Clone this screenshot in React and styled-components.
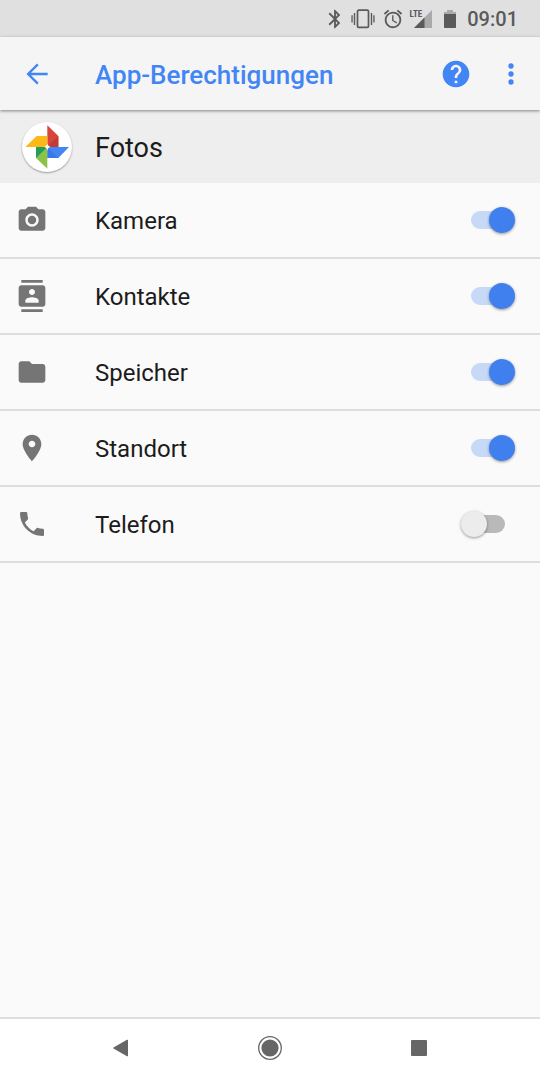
import React, {useState} from "react";
import styled, {createGlobalStyle} from "styled-components";

const GlobalStyle = createGlobalStyle`
  * {
    box-sizing: border-box;
  }
  body {
    margin: 0;
    background: #fafafa;
    color: #1c1c1c;
    font-family: Roboto, "Liberation Sans", sans-serif;
  }
`

const Page = styled.div`
  display: flex;
  flex-direction: column;
  min-height: 100vh;
`

const StatusBar = styled.div`
  display: flex;
  align-items: center;
  justify-content: flex-end;
  height: 37px;
  padding: 0 22px 0 16px;
  background: #e0e0e0;
  color: #5a5a5a;
`

const StatusIcon = styled.svg`
  display: block;
  flex: none;
  margin-right: ${({$gap}) => $gap}px;
  fill: currentColor;
`

// the triangle's empty corner runs under the network label
const SignalIcon = styled(StatusIcon)`
  margin-left: -8px;
`

const Network = styled.span`
  align-self: flex-start;
  margin-top: 8px;
  font-family: "Roboto Condensed", Roboto, sans-serif;
  font-size: 9px;
  line-height: 12px;
  font-weight: 700;
`

const Time = styled.time`
  font-size: 20px;
  line-height: 24px;
  font-weight: 500;
`

const Header = styled.header`
  position: relative;
  display: flex;
  align-items: center;
  height: 73px;
  padding-right: 13px;
  background: #f5f5f5;
  color: #4285f4;
  box-shadow: 0 1px 3px rgba(0, 0, 0, 0.45);
`

const Leading = styled.div`
  display: flex;
  flex: none;
  width: 95px;
  padding-left: ${({$inset}) => $inset}px;
`

const IconButton = styled.button`
  display: flex;
  align-items: center;
  justify-content: center;
  width: ${({$width}) => $width || 32}px;
  height: 48px;
  padding: 0;
  border: none;
  background: none;
  color: inherit;
  cursor: pointer;
`

const Title = styled.h1`
  flex: 1;
  margin: 0;
  padding-top: 2px;
  font-size: 26px;
  line-height: 32px;
  font-weight: 500;
`

const Actions = styled.div`
  display: flex;
  gap: 23px;
`

const Glyph = styled.svg`
  display: block;
  flex: none;
  width: 32px;
  height: 32px;
  fill: currentColor;
`

const AppInfo = styled.section`
  display: flex;
  align-items: center;
  height: 73px;
  background: #eeeeee;
`

const AppName = styled.h2`
  margin: 0;
  padding-top: 2px;
  font-size: 27px;
  line-height: 32px;
  font-weight: 400;
`

const AppIcon = styled.svg`
  display: block;
  width: 50px;
  height: 50px;
  border-radius: 50%;
  background: white;
  box-shadow: 0 1px 2px rgba(0, 0, 0, 0.35);
`

const List = styled.ul`
  flex: 1;
  margin: 0;
  padding: 0;
  list-style: none;
`

const Row = styled.label`
  display: flex;
  align-items: center;
  height: 76px;
  padding-right: 25px;
  border-bottom: 2px solid #dedede;
  cursor: pointer;
`

const RowIcon = styled(Leading)`
  color: #757575;
`

const RowText = styled.span`
  flex: 1;
  padding-top: 2px;
  font-size: 24px;
  line-height: 28px;
`

const Switch = styled.input`
  appearance: none;
  display: flex;
  align-items: center;
  justify-content: center;
  position: relative;
  flex: none;
  width: 54px;
  height: 26px;
  margin: 0;
  cursor: pointer;

  &::before {
    content: "";
    width: 34px;
    height: 18px;
    border-radius: 9px;
    background: #b9b9b9;
  }

  &::after {
    content: "";
    position: absolute;
    top: 0;
    left: 0;
    width: 26px;
    height: 26px;
    border-radius: 50%;
    background: #ececec;
    box-shadow: 0 1px 3px rgba(0, 0, 0, 0.4);
  }

  &:checked::before {
    background: #c6d9f7;
  }

  &:checked::after {
    left: auto;
    right: 0;
    background: #4080ee;
  }
`

const NavBar = styled.nav`
  display: flex;
  justify-content: center;
  gap: 101px;
  height: 63px;
  padding-top: 5px;
  border-top: 2px solid #dedede;
  background: white;
  color: #666666;
`

const permissions = [
    {
        name: 'Kamera',
        granted: true,
        icon: <>
            <circle cx="12" cy="12" r="3.2" />
            <path d="M9 2 7.17 4H4c-1.1 0-2 .9-2 2v12c0 1.1.9 2 2 2h16c1.1 0 2-.9 2-2V6c0-1.1-.9-2-2-2h-3.17L15 2H9zm3 15c-2.76 0-5-2.24-5-5s2.24-5 5-5 5 2.24 5 5-2.24 5-5 5z" />
        </>,
    },
    {
        name: 'Kontakte',
        granted: true,
        icon: <path d="M20 0H4v2h16V0zM4 24h16v-2H4v2zM20 4H4c-1.1 0-2 .9-2 2v12c0 1.1.9 2 2 2h16c1.1 0 2-.9 2-2V6c0-1.1-.9-2-2-2zm-8 2.75c1.24 0 2.25 1.01 2.25 2.25s-1.01 2.25-2.25 2.25S9.75 10.24 9.75 9 10.76 6.75 12 6.75zM17 17H7v-1.5c0-1.67 3.33-2.5 5-2.5s5 .83 5 2.5V17z" />,
    },
    {
        name: 'Speicher',
        granted: true,
        icon: <path d="M10 4H4c-1.1 0-1.99.9-1.99 2L2 18c0 1.1.9 2 2 2h16c1.1 0 2-.9 2-2V8c0-1.1-.9-2-2-2h-8l-2-2z" />,
    },
    {
        name: 'Standort',
        granted: true,
        icon: <path d="M12 2C8.13 2 5 5.13 5 9c0 5.25 7 13 7 13s7-7.75 7-13c0-3.87-3.13-7-7-7zm0 9.5c-1.38 0-2.5-1.12-2.5-2.5s1.12-2.5 2.5-2.5 2.5 1.12 2.5 2.5-1.12 2.5-2.5 2.5z" />,
    },
    {
        name: 'Telefon',
        granted: false,
        icon: <path d="M6.62 10.79c1.44 2.83 3.76 5.14 6.59 6.59l2.2-2.2c.27-.27.67-.36 1.02-.24 1.12.37 2.33.57 3.57.57.55 0 1 .45 1 1V20c0 .55-.45 1-1 1-9.39 0-17-7.61-17-17 0-.55.45-1 1-1h3.5c.55 0 1 .45 1 1 0 1.25.2 2.45.57 3.57.11.35.03.74-.25 1.02l-2.2 2.2z" />,
    },
]

const Status = () => (
    <StatusBar>
        <StatusIcon $gap={5} width="22" height="22" viewBox="0 0 24 24">
            <path d="M17.71 7.71 12 2h-1v7.59L6.41 5 5 6.41 10.59 12 5 17.59 6.41 19 11 14.41V22h1l5.71-5.71-4.3-4.29 4.3-4.29zM13 5.83l1.88 1.88L13 9.59V5.83zm1.88 10.46L13 18.17v-3.76l1.88 1.88z" />
        </StatusIcon>
        <StatusIcon $gap={7} width="24" height="22" viewBox="0 0 24 22">
            <rect x="6.5" y="2.2" width="11" height="17.2" rx="1.2" fill="none" stroke="currentColor" strokeWidth="1.7" />
            <path d="M.4 7.200h1.300v7.400H.4zM2.800 5h1.400v12H2.800zM19.800 5h1.400v12h-1.400zM22.300 7.200h1.300v7.400h-1.300z" />
        </StatusIcon>
        <StatusIcon $gap={6} width="22" height="22" viewBox="0 0 24 24">
            <path d="m22 5.72-4.6-3.86-1.29 1.53 4.6 3.86L22 5.72zM7.88 3.39 6.6 1.86 2 5.71l1.29 1.53 4.59-3.85zM12.5 8H11v6l4.75 2.85.75-1.23-4-2.37V8zM12 4c-4.97 0-9 4.03-9 9s4.02 9 9 9a9 9 0 0 0 0-18zm0 16c-3.87 0-7-3.13-7-7s3.13-7 7-7 7 3.13 7 7-3.13 7-7 7z" />
        </StatusIcon>
        <Network>LTE</Network>
        <SignalIcon $gap={12} width="18" height="18" viewBox="0 0 18 18">
            <path d="M18 0v18H0z" opacity=".4" />
            <path d="M10.5 7.5V18H0z" />
        </SignalIcon>
        <StatusIcon $gap={11} width="12" height="18" viewBox="0 0 12 18">
            <path d="M3 0h6v2h3v2H0V2h3z" opacity=".4" />
            <path d="M0 4h12v13.2a.8.8 0 0 1-.8.8H.8a.8.8 0 0 1-.8-.8z" />
        </StatusIcon>
        <Time>09:01</Time>
    </StatusBar>
)

const PhotosIcon = () => (
    <AppIcon viewBox="0 0 150 150">
        <path fill="#d6443c" d="M76 10l33 32v33H76z" />
        <path fill="#c23a38" d="M76 75l33-33v33z" />
        <path fill="#fbb917" d="M10 75l34-33h32v33z" />
        <path fill="#4285f4" d="M76 75h65l-32 33H76z" />
        <path fill="#3b78e7" d="M76 75l33 33H76z" />
        <path fill="#8bc34a" d="M42 75h34v65l-34-32z" />
        <path fill="#1e9e5a" d="M42 75h34l-34 33z" />
        <path fill="white" d="M76 64q1 10 11 11q-10 1-11 11q-1-10-11-11q10-1 11-11z" />
    </AppIcon>
)

const PermissionRow = ({name, icon, granted}) => {
    const [checked, setChecked] = useState(granted);

    return <li>
        <Row>
            <RowIcon $inset={16}>
                <Glyph viewBox="0 0 24 24">{icon}</Glyph>
            </RowIcon>
            <RowText>{name}</RowText>
            <Switch type="checkbox" role="switch" checked={checked} onChange={() => setChecked(prev => !prev)} />
        </Row>
    </li>
}

const App = () => {
    return <Page>
        <GlobalStyle />
        <Status />
        <Header>
            <Leading $inset={21}>
                <IconButton aria-label="Zurück">
                    <Glyph viewBox="0 0 24 24">
                        <path d="M20 11.1H7.5l5.75-5.75L12 4.1 4.1 12l7.9 7.9 1.25-1.25L7.5 12.9H20z" />
                    </Glyph>
                </IconButton>
            </Leading>
            <Title>App-Berechtigungen</Title>
            <Actions>
                <IconButton aria-label="Hilfe">
                    <Glyph viewBox="0 0 24 24">
                        <path d="M12 2C6.48 2 2 6.48 2 12s4.48 10 10 10 10-4.48 10-10S17.52 2 12 2zm1 17h-2v-2h2v2zm2.07-7.75-.9.92C13.45 12.9 13 13.5 13 15h-2v-.5c0-1.1.45-2.1 1.17-2.83l1.24-1.26c.37-.36.59-.86.59-1.41 0-1.1-.9-2-2-2s-2 .9-2 2H8c0-2.21 1.79-4 4-4s4 1.79 4 4c0 .88-.36 1.68-.93 2.25z" />
                    </Glyph>
                </IconButton>
                <IconButton aria-label="Weitere Optionen">
                    <Glyph viewBox="0 0 24 24">
                        <circle cx="12" cy="6" r="2" />
                        <circle cx="12" cy="12" r="2" />
                        <circle cx="12" cy="18" r="2" />
                    </Glyph>
                </IconButton>
            </Actions>
        </Header>
        <AppInfo>
            <Leading $inset={22}>
                <PhotosIcon />
            </Leading>
            <AppName>Fotos</AppName>
        </AppInfo>
        <List>
            {permissions.map(permission => <PermissionRow key={permission.name} {...permission} />)}
        </List>
        <NavBar>
            <IconButton $width={48} aria-label="Zurück">
                <Glyph viewBox="0 0 32 32">
                    <path d="M23 8.3v15.4q0 1-1 .5L8.500 16.6q-1-.6 0-1.2l13.500-7.600q1-.5 1 .5z" />
                </Glyph>
            </IconButton>
            <IconButton $width={48} aria-label="Startseite">
                <Glyph viewBox="0 0 32 32">
                    <circle cx="16" cy="16" r="11.300" fill="none" stroke="currentColor" strokeWidth="1.300" />
                    <circle cx="16" cy="16" r="8.600" />
                </Glyph>
            </IconButton>
            <IconButton $width={48} aria-label="Übersicht">
                <Glyph viewBox="0 0 32 32">
                    <rect x="8" y="8" width="16" height="16" rx="1" />
                </Glyph>
            </IconButton>
        </NavBar>
    </Page>
}

export default App;
